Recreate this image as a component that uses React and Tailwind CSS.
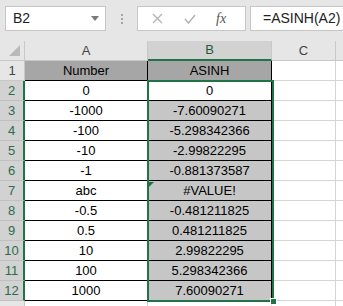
import { Fragment } from "react";

const rows = [
  ["Number", "ASINH"],
  ["0", "0"],
  ["-1000", "-7.60090271"],
  ["-100", "-5.298342366"],
  ["-10", "-2.99822295"],
  ["-1", "-0.881373587"],
  ["abc", "#VALUE!"],
  ["-0.5", "-0.481211825"],
  ["0.5", "0.481211825"],
  ["10", "2.99822295"],
  ["100", "5.298342366"],
  ["1000", "7.60090271"],
];

export default function App() {
  return (
    <div
      className="w-[343px] h-[306px] overflow-hidden bg-[#e6e6e6] text-[13px] text-black"
      style={{ fontFamily: '"Liberation Sans", Arial, sans-serif' }}
    >
      {/* formula bar */}
      <div className="h-[41px] flex items-start pt-[6px] pl-[5px]">
        <div className="w-[101px] h-[25px] bg-white border border-[#c6c6c6] flex items-center justify-between pl-[7px] pr-[6px] text-[14px] text-[#222]">
          <span>B2</span>
          <svg width="8" height="5" viewBox="0 0 8 5">
            <path d="M0 0h8L4 5z" fill="#7a7a7a" />
          </svg>
        </div>
        <div className="w-[31px] h-[25px] flex flex-col items-center justify-center gap-[2px]">
          <span className="w-[2px] h-[2px] bg-[#a6a6a6]" />
          <span className="w-[2px] h-[2px] bg-[#a6a6a6]" />
          <span className="w-[2px] h-[2px] bg-[#a6a6a6]" />
        </div>
        <div className="w-[109px] h-[25px] bg-white border border-[#c6c6c6] flex items-center pl-[14px]">
          <svg width="11" height="11" viewBox="0 0 11 11">
            <path d="M1 1l9 9M10 1l-9 9" stroke="#b3b3b3" strokeWidth="1.3" />
          </svg>
          <svg className="ml-[21px]" width="12" height="10" viewBox="0 0 12 10">
            <path d="M1 5l3.5 4L11 1" stroke="#b3b3b3" strokeWidth="1.5" fill="none" />
          </svg>
          <span
            className="ml-[20px] italic text-[14px] text-[#555]"
            style={{ fontFamily: '"Liberation Serif", serif' }}
          >
            fx
          </span>
        </div>
        <div className="ml-[4px] flex-1 h-[25px] bg-white border border-[#c6c6c6] border-r-0 flex items-center pl-[12px] text-[14px] text-[#222]">
          =ASINH(A2)
        </div>
      </div>

      {/* sheet */}
      <div className="relative grid grid-cols-[25px_123px_124px_64px_1fr] auto-rows-[20px]">
        <div className="relative border-r border-b border-[#c8c8c8] bg-[#e6e6e6]">
          <svg className="absolute right-[4px] bottom-[4px]" width="11" height="11" viewBox="0 0 11 11">
            <path d="M11 0v11H0z" fill="#b9b9b9" />
          </svg>
        </div>
        <div className="flex items-center justify-center border-r border-b border-[#c8c8c8] text-[#444]">A</div>
        <div className="flex items-center justify-center border-r border-[#c8c8c8] border-b-2 border-b-[#217346] bg-[#d2d2d2] text-[#1e5c3a]">B</div>
        <div className="flex items-center justify-center border-r border-b border-[#c8c8c8] text-[#444]">C</div>
        <div className="border-b border-[#c8c8c8]" />

        {rows.map((r, i) => {
          const head = i === 0;
          return (
            <Fragment key={i}>
              <div
                className={
                  head
                    ? "flex items-center justify-center border-r border-b border-[#c8c8c8] bg-[#e6e6e6] text-[#444]"
                    : "flex items-center justify-center border-b border-[#c0c0c0] border-r-2 border-r-[#217346] bg-[#d2d2d2] text-[#2f6b4a]"
                }
              >
                {i + 1}
              </div>
              <div
                className={
                  "flex items-center justify-center border-r border-b border-black " +
                  (head ? "bg-[#a6a6a6]" : "bg-white")
                }
              >
                {r[0]}
              </div>
              <div
                className={
                  "relative flex items-center justify-center border-r border-b border-black " +
                  (head ? "bg-[#a6a6a6]" : i === 1 ? "bg-white" : "bg-[#c6c6c6]")
                }
              >
                {i === 6 && (
                  <svg className="absolute left-[1px] top-[1px]" width="5" height="5" viewBox="0 0 5 5">
                    <path d="M0 0h5L0 5z" fill="#217346" />
                  </svg>
                )}
                {r[1]}
              </div>
              <div className="border-r border-b border-[#d4d4d4] bg-white" />
              <div className="border-b border-[#d4d4d4] bg-white" />
            </Fragment>
          );
        })}
        <div className="border-r border-[#c8c8c8] bg-[#e6e6e6]" />
        <div className="border-r border-[#d4d4d4] bg-white" />
        <div className="border-r border-[#d4d4d4] bg-white" />
        <div className="border-r border-[#d4d4d4] bg-white" />
        <div className="bg-white" />

        {/* selection B2:B12 */}
        <div className="absolute left-[147px] top-[39px] w-[127px] h-[222px] border-2 border-[#217346] pointer-events-none" />
        <div className="absolute left-[270px] top-[257px] w-[7px] h-[7px] bg-[#217346] border border-white" />
      </div>
    </div>
  );
}
